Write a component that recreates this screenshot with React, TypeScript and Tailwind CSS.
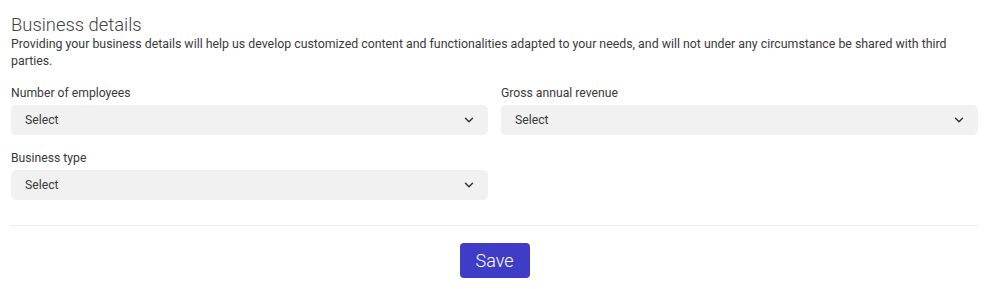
import { ChevronDown } from "lucide-react";

function SelectField({ label }: { label: string }) {
  return (
    <div className="flex flex-col">
      <label className="text-[12.2px] leading-[17px] text-[#3a3a3a] mb-[3px]">{label}</label>
      <div className="flex items-center justify-between h-[30px] rounded-[5px] bg-[#f1f1f1] pl-[14px] pr-[12px]">
        <span className="text-[12.2px] text-[#3a3a3a]">Select</span>
        <ChevronDown size={14} strokeWidth={2.5} className="text-[#333]" />
      </div>
    </div>
  );
}

export default function App() {
  return (
    <div
      className="w-[992px] h-[289px] bg-white pl-[11px] pr-[14px] pt-[14px]"
      style={{ fontFamily: "Roboto, 'Liberation Sans', sans-serif" }}
    >
      <h2 className="text-[18.4px] leading-[22px] font-light text-[#444]">Business details</h2>
      <p className="text-[12.35px] leading-[17px] text-[#3a3a3a]">
        Providing your business details will help us develop customized content and functionalities adapted to your
        needs, and will not under any circumstance be shared with third parties.
      </p>
      <div className="grid grid-cols-2 gap-x-[13px] gap-y-[15px] mt-[15px]">
        <SelectField label="Number of employees" />
        <SelectField label="Gross annual revenue" />
        <SelectField label="Business type" />
      </div>
      <div className="border-t border-[#ececec] mt-[25px] flex justify-center pt-[17px]">
        <button className="w-[70px] h-[35px] rounded-[4px] bg-[#3f3dc8] text-white text-[18px] font-light">
          Save
        </button>
      </div>
    </div>
  );
}
